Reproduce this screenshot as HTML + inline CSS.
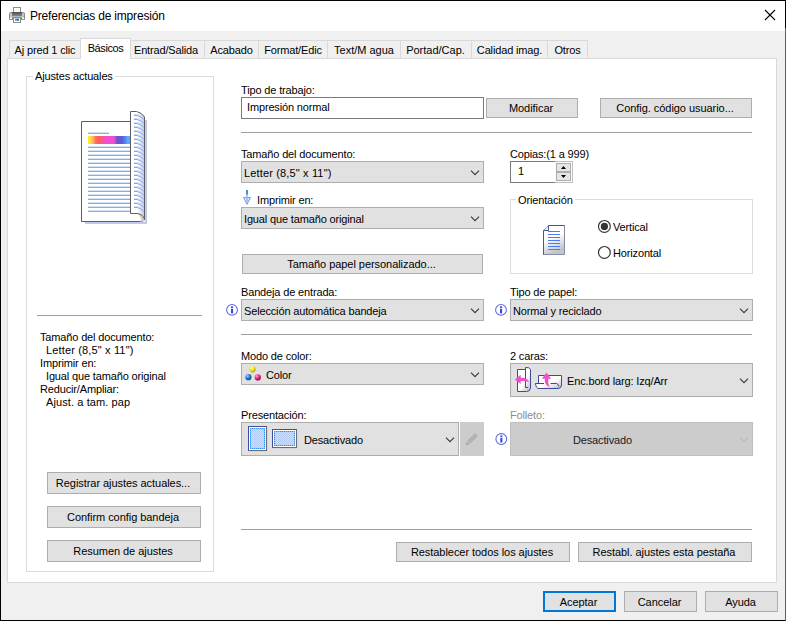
<!DOCTYPE html>
<html lang="es">
<head>
<meta charset="utf-8">
<title>Preferencias de impresión</title>
<style>
*{box-sizing:border-box;margin:0;padding:0}
html,body{width:786px;height:621px;overflow:hidden;background:#f0f0f0}
body{position:relative;font-family:"Liberation Sans",Arial,sans-serif;font-size:11px;color:#000;line-height:13px;letter-spacing:-0.15px}
.abs,.t,.btn,.combo,.hr,.tab,.info{position:absolute}
.t{white-space:nowrap;line-height:13px}
#frame{position:absolute;left:0;top:0;width:786px;height:621px;border:1px solid #000;border-right-color:#606060;pointer-events:none;z-index:50}
#frame:after{content:"";position:absolute;right:-1px;top:-1px;width:1px;height:28px;background:#000}
#titlebar{position:absolute;left:1px;top:1px;width:784px;height:30px;background:#fff}
#title{position:absolute;left:29px;top:8px;font-size:12px;line-height:15px;letter-spacing:-0.19px;white-space:nowrap}
.tab{top:40px;height:19px;background:#f0f0f0;border:1px solid #d9d9d9;border-bottom:none;border-left:none;text-align:center;line-height:13px;padding-top:3px;white-space:nowrap}
.tab.first{border-left:1px solid #d9d9d9}
.tab.active{top:38px;height:21px;background:#fff;border-left:1px solid #d9d9d9;z-index:3;padding-top:3px}
#panel{position:absolute;left:7px;top:58px;width:770px;height:525px;background:#fff;border:1px solid #d9d9d9;z-index:2}
.layer{position:absolute;left:0;top:0;width:786px;height:621px;z-index:4}
.group{position:absolute;border:1px solid #dcdcdc}
.legend{position:absolute;background:#fff;white-space:nowrap;line-height:13px;padding:0 2px}
.btn{background:#e1e1e1;border:1px solid #adadad;text-align:center;white-space:nowrap;display:flex;align-items:center;justify-content:center;line-height:13px;letter-spacing:-0.05px;padding-right:2px}
.btn.def{border:2px solid #0078d7}
.combo{background:#e1e1e1;border:1px solid #adadad;white-space:nowrap}
.combo .v{position:absolute;left:2px;line-height:13px}
.chev{position:absolute;width:10px;height:6px}
.hr{height:1px;background:#a0a0a0}
.input{position:absolute;background:#fff;border:1px solid #7a7a7a}
</style>
</head>
<body>
<div id="titlebar">
<svg class="abs" style="left:8px;top:6px" width="16" height="16" viewBox="0 0 16 16">
<defs><linearGradient id="prb" x1="0" x2="0" y1="0" y2="1"><stop offset="0" stop-color="#4e4e4e"/><stop offset="1" stop-color="#8e8e8e"/></linearGradient></defs>
<rect x="4.500" y="0.500" width="7" height="5" fill="#fdfdf6" stroke="#8c8c8c"/>
<path d="M1.500 5.500 H14.500 Q15.500 5.500 15.500 6.500 V12.500 H0.500 V6.500 Q0.500 5.500 1.500 5.500 Z" fill="#c4c4c4" stroke="#8a8a8a"/>
<rect x="3" y="5" width="10" height="4.600" fill="url(#prb)"/>
<rect x="1" y="10.500" width="14" height="1.600" fill="#fafafa"/>
<rect x="3" y="9.600" width="10" height="1" fill="#cfd8e8"/>
<rect x="4.500" y="10.500" width="7" height="5" fill="#fff" stroke="#8c8c8c"/>
<rect x="6" y="11.500" width="2" height="2.200" fill="#2f8ae0"/>
<rect x="8" y="11.500" width="2" height="2.200" fill="#1f7a58"/>
<rect x="3.300" y="10.600" width="0.900" height="1.400" fill="#333"/>
<rect x="11.800" y="10.600" width="0.900" height="1.400" fill="#333"/>
<rect x="13.700" y="8.800" width="1.100" height="1.100" fill="#7fe07a"/>
</svg>
<div id="title">Preferencias de impresión</div>
<svg class="abs" style="left:763px;top:8px" width="12" height="12" viewBox="0 0 12 12"><path d="M1 1 L11 11 M11 1 L1 11" stroke="#000" stroke-width="1.1" fill="none"/></svg>
</div>

<div class="tab first" style="left:9px;width:72px">Aj pred 1 clic</div>
<div class="tab active" style="left:80px;width:51px;letter-spacing:-0.400px">Básicos</div>
<div class="tab" style="left:131px;width:74px;padding-right:3px">Entrad/Salida</div>
<div class="tab" style="left:205px;width:54px">Acabado</div>
<div class="tab" style="left:259px;width:69px">Format/Edic</div>
<div class="tab" style="left:328px;width:73px;letter-spacing:0">Text/M agua</div>
<div class="tab" style="left:401px;width:71px;letter-spacing:0;padding-right:1px">Portad/Cap.</div>
<div class="tab" style="left:472px;width:76px">Calidad imag.</div>
<div class="tab" style="left:548px;width:40px">Otros</div>

<div id="panel"></div>

<div class="layer">
<!-- LEFT GROUP -->
<div class="group" style="left:26px;top:76px;width:188px;height:496px"></div>
<div class="legend" style="left:33px;top:70px">Ajustes actuales</div>

<!-- preview -->
<svg class="abs" style="left:76px;top:106px" width="78" height="124" viewBox="76 106 78 124">
<defs>
<linearGradient id="band" x1="0" x2="1" y1="0" y2="0">
<stop offset="0" stop-color="#fff000"/><stop offset="0.024" stop-color="#ffe858"/><stop offset="0.07" stop-color="#ffd050"/><stop offset="0.12" stop-color="#ffb860"/><stop offset="0.165" stop-color="#ff8050"/><stop offset="0.235" stop-color="#ff5a68"/><stop offset="0.34" stop-color="#ff5a78"/><stop offset="0.36" stop-color="#f050d0"/><stop offset="0.61" stop-color="#f050d0"/><stop offset="0.69" stop-color="#6058d0"/><stop offset="0.82" stop-color="#5c60d8"/><stop offset="0.84" stop-color="#5878f0"/><stop offset="0.894" stop-color="#5880f0"/><stop offset="0.91" stop-color="#58a8f8"/><stop offset="1" stop-color="#58b0f8"/>
</linearGradient>
<linearGradient id="curl" x1="0" x2="1" y1="0" y2="0">
<stop offset="0" stop-color="#ffffff"/><stop offset="0.500" stop-color="#ffffff"/><stop offset="1" stop-color="#c4c4c4"/>
</linearGradient>
</defs>
<path d="M85 222 H145 V120 H147 V224 H85 Z" fill="#bfc8f0"/>
<path d="M81.500 121.500 H144.500 V218.500 Q144.500 221.500 141 221.500 H81.500 Z" fill="#fff" stroke="#5e5e5e"/>
<path d="M136 213.500 Q143 214 144.500 219.500 Q144 221.500 140 221.500 Q143 219 138 214 Z" fill="#cfcfcf"/>
<g stroke-width="1">
<path d="M88 132.500 H109 M88 146.500 H130 M88 150.500 H130 M88 154.500 H130 M88 158.500 H130 M88 162.500 H130 M88 166.500 H130 M88 170.500 H130 M88 174.500 H130 M88 178.500 H130 M88 182.500 H130 M88 186.500 H130 M88 190.500 H130 M88 194.500 H130 M88 198.500 H130 M88 202.500 H130 M88 206.500 H130 M88 210.500 H130" stroke="#d2e0f6"/>
<path d="M88 133.500 H109 M88 147.500 H130 M88 151.500 H130 M88 155.500 H130 M88 159.500 H130 M88 163.500 H130 M88 167.500 H130 M88 171.500 H130 M88 175.500 H130 M88 179.500 H130 M88 183.500 H130 M88 187.500 H130 M88 191.500 H130 M88 195.500 H130 M88 199.500 H130 M88 203.500 H130 M88 207.500 H130 M88 211.500 H130" stroke="#8eaaf0"/>
</g>
<rect x="88" y="136" width="42.500" height="8" fill="url(#band)"/>
<path d="M130.500 111.500 H136.500 Q142 112.500 144.500 117 V219.500 Q143 214 137 213.500 H130.500 Z" fill="url(#curl)" stroke="#5e5e5e"/>
<g stroke-width="1" fill="none">
<path d="M134 114.500 h3 q4 0.800 6.500 3.600 M134 118.500 h3 q4 0.800 6.500 3.600 M134 122.500 h3 q4 0.800 6.500 3.600 M134 126.500 h3 q4 0.800 6.500 3.600 M134 130.500 h3 q4 0.800 6.500 3.600 M134 134.500 h3 q4 0.800 6.500 3.600 M134 138.500 h3 q4 0.800 6.500 3.600 M134 142.500 h3 q4 0.800 6.500 3.600 M134 146.500 h3 q4 0.800 6.500 3.600 M134 150.500 h3 q4 0.800 6.500 3.600 M134 154.500 h3 q4 0.800 6.500 3.600 M134 158.500 h3 q4 0.800 6.500 3.600 M134 162.500 h3 q4 0.800 6.500 3.600 M134 166.500 h3 q4 0.800 6.500 3.600 M134 170.500 h3 q4 0.800 6.500 3.600 M134 174.500 h3 q4 0.800 6.500 3.600 M134 178.500 h3 q4 0.800 6.500 3.600 M134 182.500 h3 q4 0.800 6.500 3.600 M134 186.500 h3 q4 0.800 6.500 3.600 M134 190.500 h3 q4 0.800 6.500 3.600 M134 194.500 h3 q4 0.800 6.500 3.600 M134 198.500 h3 q4 0.800 6.500 3.600 M134 202.500 h3 q4 0.800 6.500 3.600 M134 206.500 h3 q4 0.800 6.500 3.600" stroke="#d2e0f6"/>
<path d="M134 115.500 h3 q4 0.800 6.500 3.600 M134 119.500 h3 q4 0.800 6.500 3.600 M134 123.500 h3 q4 0.800 6.500 3.600 M134 127.500 h3 q4 0.800 6.500 3.600 M134 131.500 h3 q4 0.800 6.500 3.600 M134 135.500 h3 q4 0.800 6.500 3.600 M134 139.500 h3 q4 0.800 6.500 3.600 M134 143.500 h3 q4 0.800 6.500 3.600 M134 147.500 h3 q4 0.800 6.500 3.600 M134 151.500 h3 q4 0.800 6.500 3.600 M134 155.500 h3 q4 0.800 6.500 3.600 M134 159.500 h3 q4 0.800 6.500 3.600 M134 163.500 h3 q4 0.800 6.500 3.600 M134 167.500 h3 q4 0.800 6.500 3.600 M134 171.500 h3 q4 0.800 6.500 3.600 M134 175.500 h3 q4 0.800 6.500 3.600 M134 179.500 h3 q4 0.800 6.500 3.600 M134 183.500 h3 q4 0.800 6.500 3.600 M134 187.500 h3 q4 0.800 6.500 3.600 M134 191.500 h3 q4 0.800 6.500 3.600 M134 195.500 h3 q4 0.800 6.500 3.600 M134 199.500 h3 q4 0.800 6.500 3.600 M134 203.500 h3 q4 0.800 6.500 3.600 M134 207.500 h3 q4 0.800 6.500 3.600" stroke="#86a4f0"/>
</g>
</svg>

<div class="hr" style="left:37px;top:315px;width:165px"></div>
<div class="t" style="left:40px;top:331px">Tamaño del documento:</div>
<div class="t" style="left:46px;top:344px;letter-spacing:0.150px">Letter (8,5" x 11")</div>
<div class="t" style="left:40px;top:357px">Imprimir en:</div>
<div class="t" style="left:46px;top:370px">Igual que tamaño original</div>
<div class="t" style="left:40px;top:383px">Reducir/Ampliar:</div>
<div class="t" style="left:46px;top:396px;letter-spacing:0.100px">Ajust. a tam. pap</div>

<div class="btn" style="left:47px;top:472px;width:154px;height:22px">Registrar ajustes actuales...</div>
<div class="btn" style="left:47px;top:506px;width:154px;height:22px">Confirm config bandeja</div>
<div class="btn" style="left:47px;top:540px;width:154px;height:22px">Resumen de ajustes</div>

<!-- RIGHT SIDE -->
<div class="t" style="left:241px;top:84px">Tipo de trabajo:</div>
<div class="input" style="left:241px;top:97px;width:243px;height:22px"><span class="t" style="left:5px;top:3px">Impresión normal</span></div>
<div class="btn" style="left:486px;top:98px;width:92px;height:20px">Modificar</div>
<div class="btn" style="left:600px;top:98px;width:152px;height:20px">Config. código usuario...</div>
<div class="hr" style="left:241px;top:132px;width:511px"></div>

<div class="t" style="left:241px;top:148px">Tamaño del documento:</div>
<div class="combo" style="left:241px;top:161px;width:243px;height:22px"><span class="v" style="top:5px;letter-spacing:0.150px">Letter (8,5" x 11")</span>
<svg class="chev" style="right:3px;top:8px" viewBox="0 0 10 6"><path d="M1 0.700 L5 4.700 L9 0.700" stroke="#383838" stroke-width="1.100" fill="none"/></svg></div>

<svg class="abs" style="left:242px;top:190px" width="10" height="16" viewBox="0 0 10 16"><path d="M1.600 7.600 H8.400 L5 14.300 Z" fill="#e2eafb" stroke="#5aa2e2" stroke-width="1"/><rect x="4" y="4" width="2" height="8.500" fill="#a4b6ee" opacity="0.800"/><rect x="4" y="0" width="2" height="4.500" fill="#3c94d8"/></svg>
<div class="t" style="left:257px;top:194px">Imprimir en:</div>
<div class="combo" style="left:241px;top:207px;width:243px;height:22px"><span class="v" style="top:5px">Igual que tamaño original</span>
<svg class="chev" style="right:3px;top:8px" viewBox="0 0 10 6"><path d="M1 0.700 L5 4.700 L9 0.700" stroke="#383838" stroke-width="1.100" fill="none"/></svg></div>

<div class="btn" style="left:242px;top:254px;width:241px;height:20px">Tamaño papel personalizado...</div>

<div class="t" style="left:510px;top:148px">Copias:(1 a 999)</div>
<div class="input" style="left:510px;top:161px;width:46px;height:22px;border-right:none"><span class="t" style="left:7px;top:3px">1</span></div>
<div class="abs" style="left:555px;top:161px;width:18px;height:22px;background:#fbfbfb;border:1px solid #bebebe;border-left:none"></div>
<div class="abs" style="left:556px;top:163px;width:15px;height:9px;background:#e5e5e5;border:1px solid #adadad"></div>
<div class="abs" style="left:556px;top:172px;width:15px;height:9px;background:#e5e5e5;border:1px solid #adadad;border-top-width:2px;height:10px;top:171px"></div>
<svg class="abs" style="left:561px;top:166px" width="5" height="3" viewBox="0 0 5 3"><path d="M0 3 L2.500 0 L5 3 Z" fill="#000"/></svg>
<svg class="abs" style="left:561px;top:175px" width="5" height="3" viewBox="0 0 5 3"><path d="M0 0 L2.500 3 L5 0 Z" fill="#000"/></svg>

<div class="group" style="left:510px;top:199px;width:243px;height:75px"></div>
<div class="legend" style="left:516px;top:194px">Orientación</div>
<svg class="abs" style="left:542px;top:224px" width="24" height="32" viewBox="0 0 24 32">
<defs><linearGradient id="pg" x1="0" x2="0.350" y1="0" y2="1"><stop offset="0" stop-color="#fff"/><stop offset="0.500" stop-color="#fff"/><stop offset="1" stop-color="#c2c4cc"/></linearGradient></defs>
<path d="M6.500 1.500 H22.500 V30.500 H1.500 V6.500 Z" fill="url(#pg)" stroke="#8a8ca4" stroke-width="1"/>
<path d="M1.500 30.500 V6.500 L6.500 1.500 H22.500" fill="none" stroke="#4a5694" stroke-width="1"/>
<path d="M6.500 1.500 V6.500 H1.500" fill="#eef0fa" stroke="#4a5694" stroke-width="1"/>
<path d="M6 7.500 H18 M6 10.500 H18 M6 13.500 H18 M6 16.500 H18 M6 19.500 H18 M6 22.500 H18 M6 25.500 H18" stroke="#4a7cf4" stroke-width="1"/>
</svg>
<svg class="abs" style="left:597px;top:219px" width="15" height="15" viewBox="0 0 15 15"><circle cx="7.400" cy="7.400" r="5.900" fill="#fff" stroke="#333" stroke-width="1.150"/><circle cx="7.400" cy="7.400" r="3.600" fill="#333"/></svg>
<div class="t" style="left:613px;top:221px">Vertical</div>
<svg class="abs" style="left:597px;top:245px" width="15" height="15" viewBox="0 0 15 15"><circle cx="7.400" cy="7.400" r="5.900" fill="#fff" stroke="#333" stroke-width="1.150"/></svg>
<div class="t" style="left:613px;top:247px">Horizontal</div>

<!-- row 3 -->
<div class="t" style="left:241px;top:286px">Bandeja de entrada:</div>
<svg class="info" style="left:225px;top:303px" width="14" height="14" viewBox="0 0 14 14"><g transform="translate(0.5 0.5)"><circle cx="6.500" cy="6.400" r="5.400" fill="#fff" stroke="#5a6cde" stroke-width="1.050"/><rect x="5.500" y="5.300" width="2.100" height="4.600" fill="#3844dc"/><rect x="5.500" y="2.900" width="2.100" height="1.600" fill="#3844dc"/></g></svg>
<div class="combo" style="left:241px;top:299px;width:243px;height:22px"><span class="v" style="top:5px">Selección automática bandeja</span>
<svg class="chev" style="right:3px;top:8px" viewBox="0 0 10 6"><path d="M1 0.700 L5 4.700 L9 0.700" stroke="#383838" stroke-width="1.100" fill="none"/></svg></div>

<div class="t" style="left:510px;top:286px">Tipo de papel:</div>
<svg class="info" style="left:494px;top:303px" width="14" height="14" viewBox="0 0 14 14"><g transform="translate(0.5 0.5)"><circle cx="6.500" cy="6.400" r="5.400" fill="#fff" stroke="#5a6cde" stroke-width="1.050"/><rect x="5.500" y="5.300" width="2.100" height="4.600" fill="#3844dc"/><rect x="5.500" y="2.900" width="2.100" height="1.600" fill="#3844dc"/></g></svg>
<div class="combo" style="left:510px;top:299px;width:243px;height:22px"><span class="v" style="top:5px">Normal y reciclado</span>
<svg class="chev" style="right:3px;top:8px" viewBox="0 0 10 6"><path d="M1 0.700 L5 4.700 L9 0.700" stroke="#383838" stroke-width="1.100" fill="none"/></svg></div>

<div class="hr" style="left:241px;top:334px;width:511px"></div>

<!-- row 4 -->
<div class="t" style="left:241px;top:350px">Modo de color:</div>
<div class="combo" style="left:241px;top:363px;width:243px;height:22px">
<svg class="abs" style="left:2px;top:1px" width="18" height="17" viewBox="-0.200 0 18 17">
<defs>
<radialGradient id="gy" cx="0.350" cy="0.300" r="0.700"><stop offset="0" stop-color="#ffffa0"/><stop offset="0.500" stop-color="#f4e420"/><stop offset="1" stop-color="#b8a800"/></radialGradient>
<radialGradient id="gb" cx="0.350" cy="0.300" r="0.700"><stop offset="0" stop-color="#a8d8ff"/><stop offset="0.500" stop-color="#2a80d8"/><stop offset="1" stop-color="#104890"/></radialGradient>
<radialGradient id="gm" cx="0.350" cy="0.300" r="0.700"><stop offset="0" stop-color="#ffa8d8"/><stop offset="0.500" stop-color="#e82888"/><stop offset="1" stop-color="#980850"/></radialGradient>
</defs>
<circle cx="8.400" cy="4.300" r="3.100" fill="url(#gy)"/>
<circle cx="4.200" cy="12.200" r="3.100" fill="url(#gb)"/>
<circle cx="13.600" cy="12.400" r="3.100" fill="url(#gm)"/>
</svg>
<span class="v" style="left:24px;top:5px">Color</span>
<svg class="chev" style="right:3px;top:8px" viewBox="0 0 10 6"><path d="M1 0.700 L5 4.700 L9 0.700" stroke="#383838" stroke-width="1.100" fill="none"/></svg></div>

<div class="t" style="left:510px;top:350px">2 caras:</div>
<div class="combo" style="left:510px;top:363px;width:243px;height:34px">
<svg class="abs" style="left:-1px;top:-2px" width="60" height="36" viewBox="0 0 60 36">
<defs><linearGradient id="dg" x1="0" x2="1" y1="0" y2="1"><stop offset="0" stop-color="#fff"/><stop offset="0.550" stop-color="#fffff8"/><stop offset="1" stop-color="#b8bac8"/></linearGradient></defs>
<path d="M7.500 7.500 H15.500 V5.500 Q19.800 5 20.500 7.500 V26 Q20.300 29.500 16.500 29.500 H7.500 Z" fill="url(#dg)" stroke="#3c4a9c"/>
<path d="M15.500 7.500 V25.500 H18.200" stroke="#3c4a9c" fill="none"/>
<path d="M4.800 17.400 L10.700 12.800 V15.700 Q17.600 15.200 19 20.200 Q15.200 18.700 10.700 19.200 V22 Z" fill="#f050d0"/>
<path d="M28.500 21.500 V13.500 H51.500 V23 Q51.500 26.500 48 26.500 H29 Q26 26.500 25.500 21.500 Z" fill="url(#dg)" stroke="#3c4a9c"/>
<path d="M25.500 21.500 H34 M40.500 21.500 H46.500 Q48.500 22 48.800 24.500" stroke="#3c4a9c" fill="none"/>
<path d="M36.500 10.400 L41.200 16.800 H38.300 Q37.700 21.500 39.400 25 Q34.400 23.200 34.800 16.800 H31.800 Z" fill="#f050d0"/>
</svg>
<span class="v" style="left:56px;top:11px">Enc.bord larg: Izq/Arr</span>
<svg class="chev" style="right:3px;top:14px" viewBox="0 0 10 6"><path d="M1 0.700 L5 4.700 L9 0.700" stroke="#383838" stroke-width="1.100" fill="none"/></svg></div>

<!-- row 5 -->
<div class="t" style="left:241px;top:409px">Presentación:</div>
<div class="combo" style="left:241px;top:422px;width:218px;height:34px">
<svg class="abs" style="left:6px;top:3px" width="52" height="26" viewBox="0 0 52 26">
<defs><pattern id="chk" width="2" height="2" patternUnits="userSpaceOnUse"><rect width="2" height="2" fill="#d2e0f6"/><rect width="1" height="1" fill="#b2c8ee"/><rect x="1" y="1" width="1" height="1" fill="#b2c8ee"/></pattern></defs>
<rect x="1.500" y="1.500" width="18" height="24" fill="#c9cde0" stroke="none"/>
<rect x="0.500" y="0.500" width="18" height="24" fill="#fff" stroke="#6a6a78"/>
<path d="M0.500 24.500 V0.500 H18.500" fill="none" stroke="#4a4a94"/>
<rect x="2.500" y="2.500" width="14" height="20" fill="url(#chk)" stroke="#86bef8" stroke-width="1"/><rect x="2.500" y="2.500" width="14" height="20" fill="none" stroke="#2a94f4" stroke-width="1" stroke-dasharray="1 1" stroke-dashoffset="0.500"/>
<rect x="25.500" y="4.500" width="24" height="18" fill="#c9cde0" stroke="none"/>
<rect x="24.500" y="3.500" width="24" height="18" fill="#fff" stroke="#6a6a78"/>
<path d="M24.500 21.500 V3.500 H48.500" fill="none" stroke="#4a4a94"/>
<rect x="26.500" y="5.500" width="20" height="14" fill="url(#chk)" stroke="#86bef8" stroke-width="1"/><rect x="26.500" y="5.500" width="20" height="14" fill="none" stroke="#2a94f4" stroke-width="1" stroke-dasharray="1 1" stroke-dashoffset="0.500"/>
</svg>
<span class="v" style="left:62px;top:11px">Desactivado</span>
<svg class="chev" style="right:3px;top:14px" viewBox="0 0 10 6"><path d="M1 0.700 L5 4.700 L9 0.700" stroke="#383838" stroke-width="1.100" fill="none"/></svg></div>
<div class="abs" style="left:460px;top:422px;width:24px;height:34px;background:#cccccc">
<svg class="abs" style="left:5px;top:10px" width="14" height="14" viewBox="0 0 14 14"><path d="M10 1 L13 4 L5 12 L2 9 Z" fill="#b2b2b2"/><path d="M1.600 9.600 L4.400 12.400 L0.800 13.200 Z" fill="#a8a8a8"/></svg>
</div>
<svg class="info" style="left:494px;top:432px" width="14" height="14" viewBox="0 0 14 14"><g transform="translate(0.8 0.6)"><circle cx="6.500" cy="6.400" r="5.400" fill="#fff" stroke="#5a6cde" stroke-width="1.050"/><rect x="5.500" y="5.300" width="2.100" height="4.600" fill="#3844dc"/><rect x="5.500" y="2.900" width="2.100" height="1.600" fill="#3844dc"/></g></svg>

<div class="t" style="left:510px;top:409px;color:#8e8e8e">Folleto:</div>
<div class="combo" style="left:510px;top:422px;width:243px;height:34px;background:#cccccc;border-color:#bfbfbf">
<span class="v" style="left:62px;top:11px;color:#1a1a1a">Desactivado</span>
<svg class="chev" style="right:3px;top:14px" viewBox="0 0 10 6"><path d="M1 0.700 L5 4.700 L9 0.700" stroke="#b8b8b8" stroke-width="1.100" fill="none"/></svg></div>

<!-- bottom -->
<div class="hr" style="left:241px;top:529px;width:511px"></div>
<div class="btn" style="left:396px;top:542px;width:174px;height:20px">Restablecer todos los ajustes</div>
<div class="btn" style="left:578px;top:542px;width:174px;height:20px">Restabl. ajustes esta pestaña</div>

<div class="btn def" style="left:543px;top:591px;width:73px;height:21px;padding-top:2px">Aceptar</div>
<div class="btn" style="left:624px;top:591px;width:73px;height:21px;padding-top:2px">Cancelar</div>
<div class="btn" style="left:705px;top:591px;width:73px;height:21px;padding-top:2px">Ayuda</div>
</div>
<div id="frame"></div>
</body>
</html>
